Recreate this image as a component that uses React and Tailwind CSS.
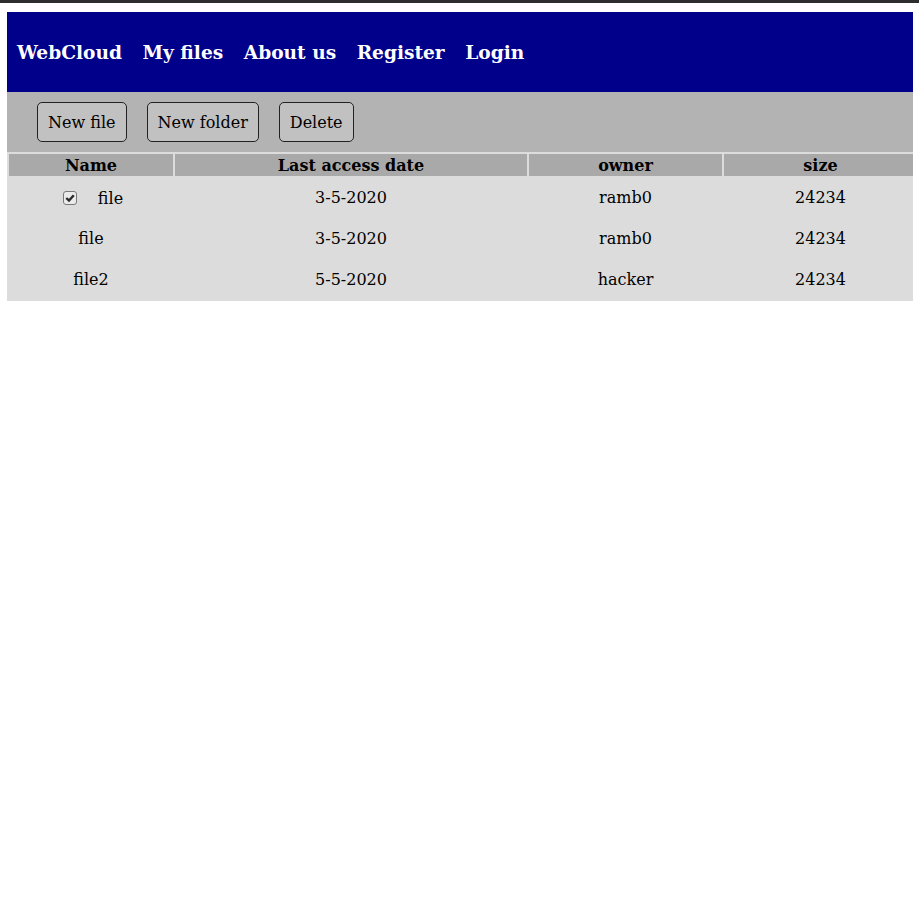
import React from "react";

function Check() {
  return (
    <span className="ml-[4px] mr-[3px] inline-flex w-[14px] h-[14px] items-center justify-center rounded-[3px] border border-[#7a7a7a] bg-[#ebebeb]">
      <svg width="10" height="10" viewBox="0 0 10 10">
        <path d="M1.3 5 L4 7.6 L8.8 2.2" fill="none" stroke="#2a2a2a" strokeWidth="2.4" />
      </svg>
    </span>
  );
}

export default function App() {
  const rows = [
    { name: "file", date: "3-5-2020", owner: "ramb0", size: "24234", checked: true },
    { name: "file", date: "3-5-2020", owner: "ramb0", size: "24234" },
    { name: "file2", date: "5-5-2020", owner: "hacker", size: "24234" },
  ];
  return (
    <div className="min-h-[897px] bg-white text-black font-['DejaVu_Serif',serif]">
      <div className="h-[3px] bg-[#2d2d2d]" />
      <div className="ml-[7px] mr-[6px] mt-[9px] overflow-hidden">
        <nav className="h-[80px] bg-[#00008b] flex items-center pl-[10px] pt-[2px] gap-[20.5px] text-white font-bold text-[18.6px]">
          <span>WebCloud</span>
          <span>My files</span>
          <span>About us</span>
          <span>Register</span>
          <span>Login</span>
        </nav>
        <div className="h-[60px] bg-[#b4b3b3] flex items-center pl-[30px] gap-[20px] text-[16px]">
          <button className="h-[40px] px-[10px] pt-[2px] border border-[#222] rounded-[5px] bg-[#c1c1c1]">New file</button>
          <button className="h-[40px] px-[10px] pt-[2px] border border-[#222] rounded-[5px] bg-[#c1c1c1]">New folder</button>
          <button className="h-[40px] px-[10px] pt-[2px] border border-[#222] rounded-[5px] bg-[#c1c1c1]">Delete</button>
        </div>
        <table className="w-[calc(100%+6px)] bg-[#dcdcdc] border-separate border-spacing-[2px] text-[16px]">
          <thead>
            <tr className="h-[22px]">
              <th className="w-[164px] bg-[#a9a9a9] p-0 pt-[1px] leading-[21px]">Name</th>
              <th className="w-[352px] bg-[#a9a9a9] p-0 pt-[1px] leading-[21px]">Last access date</th>
              <th className="w-[193px] bg-[#a9a9a9] p-0 pt-[1px] leading-[21px]">owner</th>
              <th className="bg-[#a9a9a9] p-0 pt-[1px] leading-[21px]">size</th>
            </tr>
          </thead>
          <tbody>
            {rows.map((r, i) => (
              <tr key={i} className="h-[39px]">
                <td className="text-center p-0">
                  {r.checked ? (
                    <span className="inline-flex items-center">
                      <Check />
                      <span className="ml-[18px] relative top-[1px]">{r.name}</span>
                    </span>
                  ) : (
                    r.name
                  )}
                </td>
                <td className="text-center p-0">{r.date}</td>
                <td className="text-center p-0">{r.owner}</td>
                <td className="text-center p-0">{r.size}</td>
              </tr>
            ))}
          </tbody>
        </table>
      </div>
    </div>
  );
}
